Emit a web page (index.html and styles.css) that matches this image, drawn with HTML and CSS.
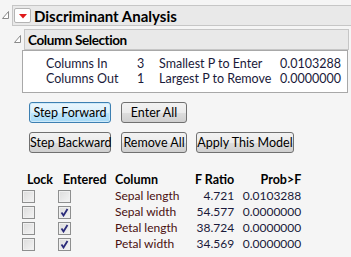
FILE: index.html
```html
<!DOCTYPE html>
<html lang="en">
<head>
  <meta charset="UTF-8" />
  <title>Discriminant Analysis</title>
  <link rel="stylesheet" href="styles.css">
</head>
<body>

  <div class="outline">
    <div class="outline-head">
      <svg class="twisty" width="7" height="8" viewBox="0 0 7 8"><path d="M6.5 0.5 L6.5 7.5 L0.5 7.5 Z" fill="#fff" stroke="#8a8a8a"/></svg>
      <div class="bar bar-main">
        <span class="red-tri">
          <svg width="12" height="10" viewBox="0 0 12 10"><path d="M2 3 L10 3 L6 7.5 Z" fill="#e0191b"/></svg>
        </span>
        <span class="title">Discriminant Analysis</span>
      </div>
    </div>

    <div class="outline sub">
      <div class="outline-head">
        <svg class="twisty" width="7" height="8" viewBox="0 0 7 8"><path d="M6.5 0.5 L6.5 7.5 L0.5 7.5 Z" fill="#fff" stroke="#8a8a8a"/></svg>
        <div class="bar bar-sub"><span class="title small">Column Selection</span></div>
      </div>

      <div class="content">
        <div class="stats">
          <div class="stat-row">
            <span class="s-label">Columns In</span><span class="s-num">3</span>
            <span class="s-label2">Smallest P to Enter</span><span class="s-val">0.0103288</span>
          </div>
          <div class="stat-row">
            <span class="s-label">Columns Out</span><span class="s-num">1</span>
            <span class="s-label2">Largest P to Remove</span><span class="s-val">0.0000000</span>
          </div>
        </div>

        <div class="buttons">
          <div class="btn-row">
            <button class="btn focus w1">Step Forward</button>
            <button class="btn w2">Enter All</button>
          </div>
          <div class="btn-row">
            <button class="btn w1">Step Backward</button>
            <button class="btn w2">Remove All</button>
            <button class="btn w3">Apply This Model</button>
          </div>
        </div>

        <table class="cols">
          <thead>
            <tr>
              <th class="c-lock">Lock</th>
              <th class="c-ent">Entered</th>
              <th class="c-name">Column</th>
              <th class="c-f">F Ratio</th>
              <th class="c-p">Prob&gt;F</th>
            </tr>
          </thead>
          <tbody>
            <tr>
              <td><span class="chk"></span></td>
              <td><span class="chk"></span></td>
              <td class="name">Sepal length</td>
              <td class="num">4.721</td>
              <td class="num">0.0103288</td>
            </tr>
            <tr>
              <td><span class="chk"></span></td>
              <td><span class="chk on"><svg width="9" height="9" viewBox="0 0 9 9"><path d="M1.5 4.5 L3.5 7.5 L7.5 1" fill="none" stroke="#2b2b7a" stroke-width="1.8"/></svg></span></td>
              <td class="name">Sepal width</td>
              <td class="num">54.577</td>
              <td class="num">0.0000000</td>
            </tr>
            <tr>
              <td><span class="chk"></span></td>
              <td><span class="chk on"><svg width="9" height="9" viewBox="0 0 9 9"><path d="M1.5 4.5 L3.5 7.5 L7.5 1" fill="none" stroke="#2b2b7a" stroke-width="1.8"/></svg></span></td>
              <td class="name">Petal length</td>
              <td class="num">38.724</td>
              <td class="num">0.0000000</td>
            </tr>
            <tr>
              <td><span class="chk"></span></td>
              <td><span class="chk on"><svg width="9" height="9" viewBox="0 0 9 9"><path d="M1.5 4.5 L3.5 7.5 L7.5 1" fill="none" stroke="#2b2b7a" stroke-width="1.8"/></svg></span></td>
              <td class="name">Petal width</td>
              <td class="num">34.569</td>
              <td class="num">0.0000000</td>
            </tr>
          </tbody>
        </table>
      </div>
    </div>
  </div>

</body>
</html>
```

FILE: styles.css
```css
* {
  margin: 0;
  padding: 0;
  box-sizing: border-box;
}
body {
  background: #f5f5f5;
  font-family: Lato, 'Noto Sans', sans-serif;
  font-size: 12.5px;
  color: #000;
  padding-top: 5px;
  overflow: hidden;
  white-space: nowrap;
}
.outline-head {
  display: flex;
  align-items: flex-start;
}
.twisty {
  margin: 6px 3px 0 2px;
  flex: none;
}
.bar {
  flex: 1;
  display: flex;
  align-items: center;
  background: #e9e9e9;
  border: 1px solid #c6c6c6;
  height: 21px;
}
.bar-main {
  margin-right: -2px;
}
.red-tri {
  width: 17px;
  height: 15px;
  margin-left: 1px;
  border: 1px solid #b4b4b4;
  border-radius: 2px;
  background: #fff;
  display: flex;
  align-items: center;
  justify-content: center;
}
.title {
  font-weight: 700;
  font-size: 15px;
  margin-left: 3px;
}
.title.small {
  font-size: 13.5px;
  letter-spacing: -0.4px;
  margin-left: 3px;
}
.sub {
  margin-top: 3px;
  margin-left: 12px;
}
.bar-sub {
  margin-right: 2px;
}
.content {
  margin-left: 10px;
}
.stats {
  background: #fff;
  border: 1px solid #a8a8a8;
  margin-right: 3px;
  padding: 5px 0 6px 0;
}
.stat-row {
  display: flex;
  height: 15px;
  line-height: 15px;
  color: #1a1a3a;
}
.s-label {
  width: 91px;
  margin-left: 23px;
}
.s-num {
  width: 22px;
}
.s-label2 {
  width: 121px;
}
.buttons {
  margin-top: 9px;
  padding-left: 7px;
  display: flex;
  flex-direction: column;
  gap: 9px;
}
.btn-row {
  display: flex;
  gap: 10px;
}
.btn {
  font-family: inherit;
  font-size: 12.5px;
  height: 21px;
  padding: 0;
  white-space: nowrap;
  border: 1px solid #707070;
  border-radius: 3px;
  background: linear-gradient(#f2f2f2 0%, #ebebeb 50%, #dddddd 51%, #cfcfcf 100%);
  color: #000;
}
.btn.focus {
  border-color: #3c7fb1;
  background: linear-gradient(#eaf6fd 0%, #d9f0fc 50%, #bee6fd 51%, #a7d9f5 100%);
  box-shadow: inset 0 0 0 1px #cde9f9;
}
.w1 { width: 82px; }
.w2 { width: 66px; }
.w3 { width: 98px; margin-left: -1px; }
.cols {
  margin-top: 19px;
  border-collapse: collapse;
  table-layout: fixed;
}
.cols th {
  font-weight: 700;
  text-align: left;
  height: 16px;
  line-height: 16px;
  padding: 0;
}
.cols td {
  height: 16px;
  padding: 0;
  line-height: 16px;
  vertical-align: middle;
}
.cols .c-lock { width: 36px; padding-left: 5px; }
.cols .c-ent { width: 57px; padding-left: 5px; }
.c-name { width: 80px; }
.cols .c-f { width: 38px; text-align: right; }
.cols .c-p { width: 67px; text-align: right; }
.name { color: #4a1010; font-size: 12px; }
.num { text-align: right; color: #1a1a3a; font-size: 12px; }
.chk {
  display: inline-flex;
  align-items: center;
  justify-content: center;
  width: 13px;
  height: 13px;
  border: 1px solid #8e8f8f;
  background: linear-gradient(135deg, #dcdcdc, #f4f4f4);
  box-shadow: inset 0 0 0 1px #f0f0f0;
  vertical-align: middle;
}
```
